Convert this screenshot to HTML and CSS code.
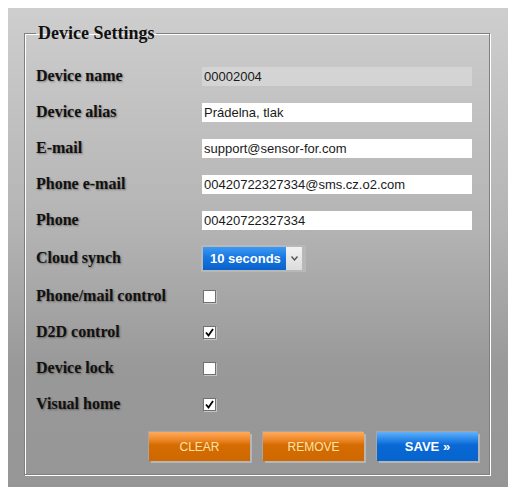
FILE: index.html
```html
<!DOCTYPE html>
<html>
<head>
  <title>Device Settings</title>
  <link rel="stylesheet" href="styles.css">
</head>
<body>
  <div class="panel">
    <fieldset class="settings">
      <legend>Device Settings</legend>
      <div class="form-grid">
        <label>Device name</label>
        <input type="text" class="field readonly" value="00002004" readonly>

        <label>Device alias</label>
        <input type="text" class="field" value="Prádelna, tlak">

        <label>E-mail</label>
        <input type="text" class="field" value="support@sensor-for.com">

        <label>Phone e-mail</label>
        <input type="text" class="field" value="00420722327334@sms.cz.o2.com">

        <label>Phone</label>
        <input type="text" class="field" value="00420722327334">

        <label>Cloud synch</label>
        <div class="select">
          <span class="select-value">10 seconds</span>
          <span class="select-arrow">
            <svg width="7" height="5" viewBox="0 0 7 5"><path d="M0.5 0.5 L3.5 4 L6.5 0.5" fill="none" stroke="#555" stroke-width="1.4"/></svg>
          </span>
        </div>

        <label>Phone/mail control</label>
        <span class="check"></span>

        <label>D2D control</label>
        <span class="check">
          <svg width="11" height="11" viewBox="0 0 11 11"><path d="M2 5.5 L4.5 8.5 L9 2" fill="none" stroke="#000" stroke-width="1.8"/></svg>
        </span>

        <label>Device lock</label>
        <span class="check"></span>

        <label>Visual home</label>
        <span class="check">
          <svg width="11" height="11" viewBox="0 0 11 11"><path d="M2 5.5 L4.5 8.5 L9 2" fill="none" stroke="#000" stroke-width="1.8"/></svg>
        </span>
      </div>

      <div class="actions">
        <button class="btn btn-orange">CLEAR</button>
        <button class="btn btn-orange">REMOVE</button>
        <button class="btn btn-blue">SAVE &raquo;</button>
      </div>
    </fieldset>
  </div>
</body>
</html>
```

FILE: styles.css
```css
body {
  margin: 8px;
  background-color: #fff;
  font-family: "Liberation Serif", "Times New Roman", serif;
}

.panel {
  background: linear-gradient(to bottom, #cecece 0%, #b4b4b4 45%, #999 75%, #969696 100%);
  padding: 15px 18px 12px 16px;
  box-shadow: 1px 2px 5px rgba(0, 0, 0, 0.3);
}

.settings {
  margin: 0;
  padding: 22px 11px 13px 10px;
  border: 1px solid #808080;
  box-shadow: inset 1px 1px 0 #fff, 1px 1px 0 #fff;
}

.settings legend {
  padding: 0 2px;
  font-size: 18px;
  font-weight: bold;
  color: #111;
  margin-left: 1px;
}

.form-grid {
  display: grid;
  grid-template-columns: 166px 272px;
  grid-template-rows: repeat(5, 20px) 24px repeat(4, 20px);
  row-gap: 16px;
  align-items: center;
}

.form-grid label {
  font-size: 16px;
  font-weight: bold;
  color: #111;
  padding-left: 1px;
  text-shadow: 1px 1px 2px rgba(0, 0, 0, 0.4);
  white-space: nowrap;
}

.field {
  box-sizing: border-box;
  width: 270px;
  height: 19px;
  margin: 0 0 0 1px;
  padding: 0 2px;
  border: none;
  outline: none;
  background: #fff;
  font-family: "Liberation Sans", Arial, sans-serif;
  font-size: 13px;
  color: #1a1a1a;
}

.field.readonly {
  background: #d4d4d4;
}

.select {
  display: flex;
  width: 99px;
  height: 23px;
  border: 2px solid #b8b8b8;
  border-right-width: 4px;
}

.select-value {
  flex: 1;
  display: flex;
  align-items: center;
  padding-left: 7px;
  background: linear-gradient(to bottom, #3b9af4 0%, #1877e0 45%, #0a62cc 100%);
  color: #fff;
  font-family: "Liberation Sans", Arial, sans-serif;
  font-size: 13px;
  font-weight: bold;
}

.select-arrow {
  width: 16px;
  display: flex;
  align-items: center;
  justify-content: center;
  background: linear-gradient(to bottom, #f2f2f2, #dcdcdc);
}

.check {
  box-sizing: border-box;
  width: 13px;
  height: 13px;
  margin-left: 2px;
  border: 1px solid #707070;
  background: #fff;
  box-shadow: 1px 1px 0 #c4c4c4;
  display: flex;
  align-items: center;
  justify-content: center;
}

.actions {
  display: flex;
  justify-content: flex-end;
  gap: 13px;
  margin-top: 18px;
}

.btn {
  width: 101px;
  height: 29px;
  border: none;
  margin: 0;
  padding: 0;
  font-family: "Liberation Sans", Arial, sans-serif;
  font-size: 12px;
  cursor: pointer;
  box-shadow: 2px 2px 0 rgba(255, 255, 255, 0.3), -1px -1px 0 rgba(255, 255, 255, 0.15);
}

.btn-orange {
  background: linear-gradient(to bottom, #ffaa5c 0%, #f08a2c 25%, #d46c02 45%, #cf6800 100%);
  color: #ffe3a6;
}

.btn-blue {
  background: linear-gradient(to bottom, #62b0fa 0%, #2a88ea 25%, #0a68d4 45%, #0664cf 100%);
  color: #fff;
  font-size: 13px;
  font-weight: bold;
}
```
